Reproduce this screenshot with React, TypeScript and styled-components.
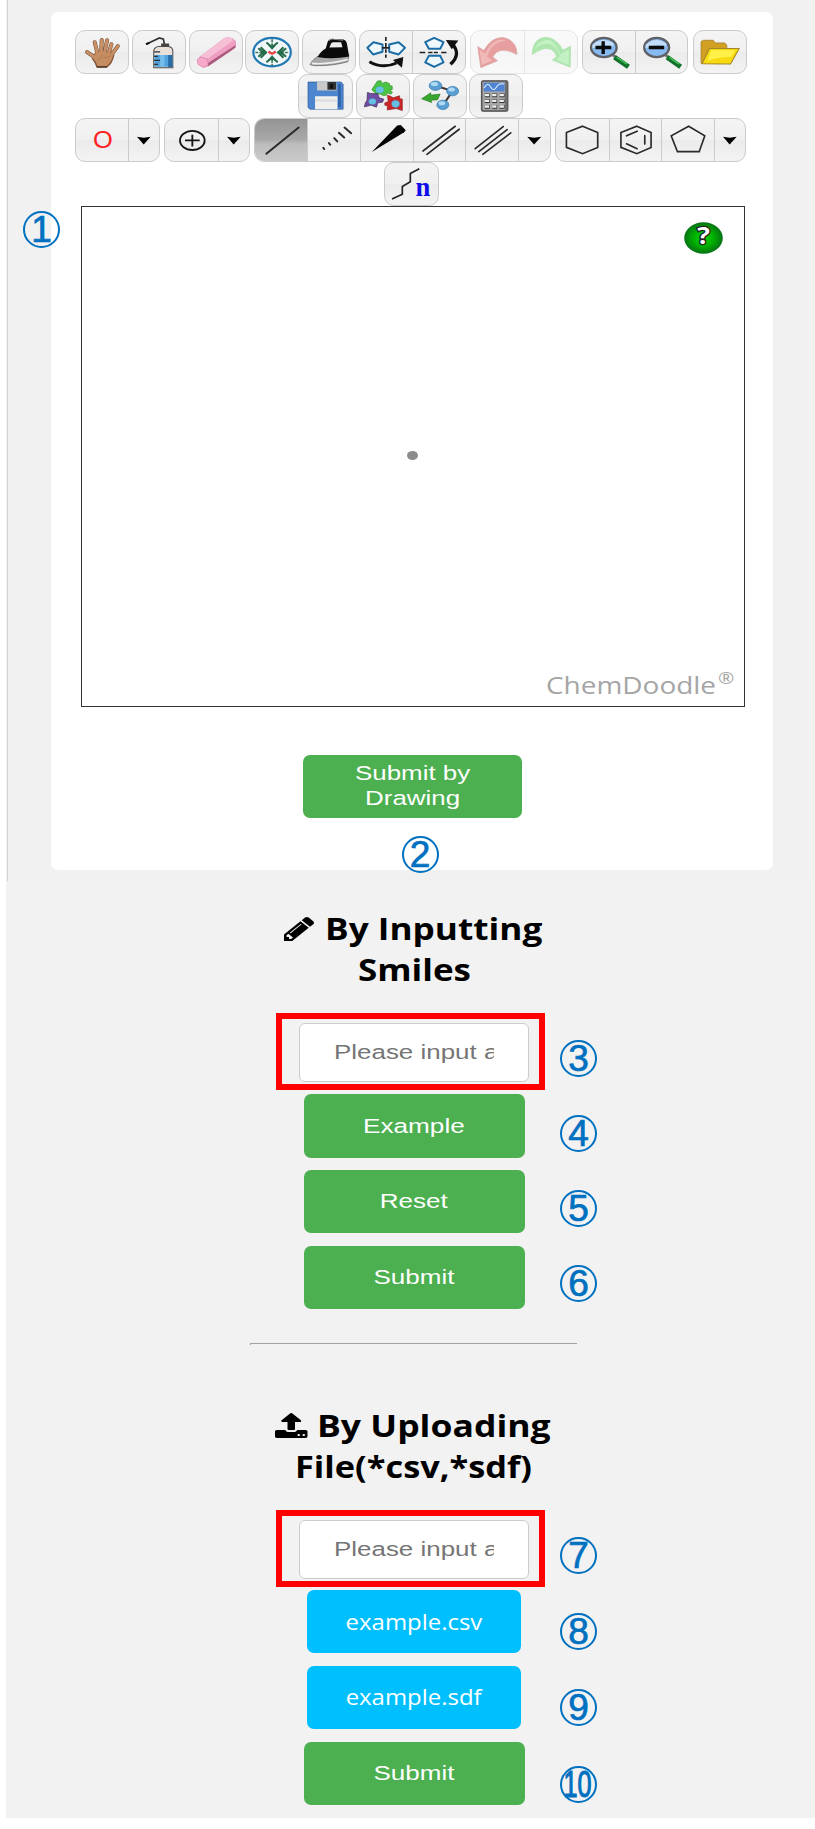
import React from 'react';
import styled, { createGlobalStyle, css } from 'styled-components';

const Global = createGlobalStyle`
  * { box-sizing: border-box; }
  body { margin: 0; background: #fff; font-family: 'Open Sans', 'Noto Sans', sans-serif; }
  button { font: inherit; border: 0; padding: 0; margin: 0; }
`;

/* ---------- page ---------- */
const Page = styled.div`
  width: 815px;
  height: 1829px;
  padding-left: 6px;
  background: #fff;
  overflow: hidden;
`;
const Main = styled.main`
  height: 1818px;
  background: #f2f2f2;
`;
const DrawSection = styled.section`
  height: 881px;
  margin-left: 1px;
  padding: 12px 0 0 43px;
  border-left: 1px solid #d3d3d3;
  background: #f1f1f1;
`;
const Card = styled.div`
  position: relative;
  width: 722px;
  height: 858px;
  padding-top: 18px;
  background: #fff;
  border-radius: 7px;
`;

/* ---------- toolbar ---------- */
const ToolRow = styled.div<{ $indent: number }>`
  display: flex;
  align-items: center;
  height: 44px;
  padding-left: ${(p) => p.$indent}px;
`;
const ToolGroup = styled.div<{ $gap?: number; $faded?: boolean }>`
  display: flex;
  flex: none;
  height: 43.6px;
  margin-left: ${(p) => p.$gap ?? 0}px;
  border: 1px solid #cbcbcb;
  border-radius: 10px;
  overflow: hidden;
  background: linear-gradient(#f4f4f4, #f0f0f0 49%, #ebebeb 51%, #f3f3f3);
  opacity: ${(p) => (p.$faded ? 0.48 : 1)};
`;
const ToolButton = styled.button<{ $w: number; $active?: boolean }>`
  flex: none;
  width: ${(p) => p.$w}px;
  height: 100%;
  background: transparent;
  & + & { border-left: 1px solid #cbcbcb; }
  ${(p) => p.$active && css`background: linear-gradient(#949494, #a8a8a8 48%, #bdbdbd 60%, #cacaca);`}
  svg { display: block; width: 100%; height: 100%; }
`;

const Icon = ({ box, children }: { box: string; children: React.ReactNode }) => (
  <svg viewBox={box} preserveAspectRatio="none">{children}</svg>
);

const Hand = () => {
  const fingers = 'M112 104L103 67M122 100L124 60M132 100L140 61M143 106L153 73M148 112L172 79M112 122L98 109L80 97';
  return (
    <Icon box="47 33 157 126">
      <path d={fingers} stroke="#775034" strokeWidth="12" strokeLinecap="round" fill="none" />
      <path d="M104 98Q126 88 150 98L162 106Q156 134 141 143H108Q103 128 94 116Z" fill="#80563a" />
      <path d={fingers} stroke="#c99067" strokeWidth="9" strokeLinecap="round" fill="none" />
      <path d="M106 98Q126 92 147 100L158 107Q152 130 138 140H112Q108 128 98 115Z" fill="#c68c61" />
      <path d="M110 124Q121 116 124 106M128 112Q140 118 151 108" stroke="#ae784f" strokeWidth="2.5" fill="none" />
      <path d="M109 142H140" stroke="#4d3322" strokeWidth="4" />
    </Icon>
  );
};
const Bottle = () => (
  <Icon box="219 33 156 126">
    <path d="M258 73L298 54L310 58L313 74" fill="none" stroke="#333" strokeWidth="5" />
    <path d="M258 73L268 69" stroke="#111" strokeWidth="6" />
    <path d="M303 71h24v11h-24z" fill="#444" />
    <path d="M281 92Q284 81 296 80H325Q337 82 338 92V144H281Z" fill="#e9e0da" stroke="#4b4b4b" strokeWidth="3" />
    <path d="M283 106H336V141H283Z" fill="#4fa3df" />
    <path d="M324 106H337V142H324Z" fill="#2a6da6" />
    <path d="M300 106h13v35h-13z" fill="#77bdeb" />
    <path d="M282 96h18M282 110h12M282 122h18M282 134h12" stroke="#333" strokeWidth="4" />
  </Icon>
);
const Eraser = () => (
  <Icon box="390 33 157 126">
    <path d="M412 120L420 110L492 55L500 52L516 54L527 65L527 82L518 90L446 139L430 144L414 134Z" fill="#d985aa" />
    <path d="M420 110L492 55L500 52L516 54L520 63L444 117Z" fill="#f6bfd6" />
    <path d="M444 117L520 61L527 68L525 77L443 132Z" fill="#ee9fc2" />
    <path d="M443 131L526 76L525 84L444 140Z" fill="#a7597e" />
    <path d="M412 121L421 112L442 118L444 137L430 143L414 134Z" fill="#f7a9c9" stroke="#dd85ad" strokeWidth="2" />
  </Icon>
);
const Snowflake = () => (
  <Icon box="559 33 156 126">
    <ellipse cx="637" cy="97" rx="56" ry="43" fill="#f1f7f9" stroke="#2179b4" strokeWidth="6.5" />
    <path d="M637 58V88M637 108V138M587 98H623M651 98H688" stroke="#3a7b5a" strokeWidth="5" strokeDasharray="9 3" />
    <path d="M620 68L637 82L654 68M620 128L637 114L654 128M603 82L619 98L603 114M671 82L655 98L671 114M596 85L610 98L596 111M679 85L664 98L679 111" fill="none" stroke="#246b49" strokeWidth="6" />
    <path d="M625 77L637 89L649 77ZM625 119L637 107L649 119ZM609 87L622 98L609 109ZM665 87L652 98L665 109Z" fill="#246b49" />
    <path d="M628 92L637 98L646 92L650 99L637 106L624 99Z" fill="#e34343" />
  </Icon>
);
const Iron = () => (
  <Icon box="40 33 157 126">
    <path d="M61 135Q69 117 91 107L177 105L174 126Q130 139 75 138Z" fill="#a8a8a8" stroke="#555" strokeWidth="2" />
    <path d="M66 131Q110 136 174 119" stroke="#eee" strokeWidth="5" fill="none" />
    <path d="M83 112Q96 91 108 86L114 65Q118 56 130 57L161 59Q169 61 171 69L178 110Q130 120 83 112Z" fill="#0b0b0b" />
    <path d="M119 83L124 71Q126 67 132 67L154 67L158 82Z" fill="#ececec" />
    <path d="M117 63Q121 56 132 58L160 61" stroke="#888" strokeWidth="3" fill="none" />
  </Icon>
);
const FlipH = () => (
  <Icon box="213 33 154 126">
    <path d="M235 84L253 67L280 74V96L252 104ZM347 84L328 67L300 74V96L328 104Z" fill="#eff8fc" stroke="#1b6ca5" strokeWidth="6" strokeLinejoin="round" />
    <path d="M290 51V63M290 69V82M290 88V99M290 104V114M279 84H301" stroke="#222" strokeWidth="5" />
    <path d="M241 126Q281 149 322 130" fill="none" stroke="#111" strokeWidth="9" />
    <path d="M311 121L342 112L338 144Z" fill="#111" />
  </Icon>
);
const FlipV = () => (
  <Icon box="368 33 156 126">
    <path d="M432 54L460 67L450 87H416L405 67ZM432 142L460 128L450 108H416L405 128Z" fill="#eff8fc" stroke="#1b6ca5" strokeWidth="6" strokeLinejoin="round" />
    <path d="M388 98H405M414 98H427M431 98H443M453 98H469" stroke="#222" strokeWidth="5" />
    <path d="M481 134Q515 103 486 72" fill="none" stroke="#111" strokeWidth="10" />
    <path d="M467 60L505 62L485 88Z" fill="#111" />
  </Icon>
);
const Undo = () => (
  <Icon box="544 33 157 126">
    <path d="M564 80L573 144L623 123L608 112Q627 75 681 104Q680 60 640 53Q606 50 582 92Z" fill="#cf3636" stroke="#aa4a4a" strokeWidth="2" />
    <path d="M569 90L576 136L608 122L592 111Q605 65 650 62Q611 49 586 101Z" fill="#e36f6d" />
  </Icon>
);
const Redo = () => (
  <Icon box="12 33 158 126">
    <path d="M34 104Q34 58 72 52Q107 52 127 91L150 79L149 143L95 121L108 111Q92 65 34 104Z" fill="#57cf57" stroke="#59b759" strokeWidth="2" />
    <path d="M39 88Q58 56 87 61Q107 71 118 104L145 88L144 136L106 120L117 109Q97 47 39 88Z" fill="#86e284" />
  </Icon>
);
const Magnifier = ({ plus }: { plus?: boolean }) => (
  <Icon box={plus ? '190 33 154 126' : '189 33 158 126'}>
    <path d="M279 106L299 120" stroke="#777" strokeWidth="9" />
    <path d="M290 117L319 137" stroke="#11702a" strokeWidth="15" strokeLinecap="square" />
    <path d="M290 113L321 133" stroke="#40bd55" strokeWidth="5" />
    <ellipse cx="252" cy="83" rx="38" ry="29" fill="#87baf0" stroke="#5d6064" strokeWidth="7" />
    <path d="M218 75Q247 48 281 70L280 80Q246 70 218 86Z" fill="#c3ddf8" />
    <path d={plus ? 'M227 83H274M250 64V103' : 'M228 83H275'} stroke="#0b0b0b" strokeWidth="10" />
  </Icon>
);
const Folder = () => (
  <Icon box="522 33 156 126">
    <path d="M543 131V65L550 61H579L586 69H614L620 77V91L602 132Z" fill="#d1a022" stroke="#9a741c" strokeWidth="2" />
    <path d="M546 132L568 86H657L631 133Z" fill="#f7d90f" stroke="#a1842c" strokeWidth="3" strokeLinejoin="round" />
    <path d="M573 91H645L634 111Q590 112 562 124Z" fill="#fff14a" />
  </Icon>
);
const Floppy = () => (
  <Icon box="28 167 157 124">
    <path d="M55 188H154L160 195V269H61L55 264Z" fill="#4d86cf" stroke="#2a5694" strokeWidth="2" />
    <path d="M82 187H140V213H82Z" fill="#c9c9c9" />
    <path d="M113 188H139V211H113Z" fill="#303030" /><path d="M120 193H130V208H120Z" fill="#111" />
    <path d="M76 230H143V269H76Z" fill="#f0f0ee" /><path d="M76 239H143V247H76Z" fill="#dedede" />
    <path d="M145 194H153V263H145Z" fill="#2e62aa" />
  </Icon>
);
const Blocks = () => (
  <Icon box="201 167 155 124">
    <path d="M256 194L262 185L272 184L276 192L287 188L298 193V199L306 200V210L299 211L307 219L302 224L290 220L289 227L279 228L270 224L257 222L245 211Z" fill="#4cc443" stroke="#31882c" strokeWidth="2" />
    <path d="M232 219L242 222L263 223L267 235L281 239L277 248L263 250L259 263L243 257L223 262L226 250L231 242Z" fill="#704ca3" stroke="#3c2859" strokeWidth="2" />
    <path d="M292 227L302 231L309 235L328 229L328 237L336 239V273L318 267L291 271L292 259L284 257V250L294 247Z" fill="#cf2427" stroke="#8c2022" strokeWidth="2" />
    <g fill="#68bfe4" stroke="#3e91b8"><ellipse cx="269" cy="211" rx="12" ry="10" /><ellipse cx="247" cy="246" rx="11" ry="9" /><ellipse cx="316" cy="253" rx="12" ry="11" /></g>
  </Icon>
);
const Molecule = () => (
  <Icon box="373 167 155 124">
    <path d="M437 199L488 215L460 256" fill="none" stroke="#403537" strokeWidth="6" />
    <g fill="#5a9fd3" stroke="#397ba6" strokeWidth="2"><ellipse cx="437" cy="199" rx="19" ry="14" /><ellipse cx="488" cy="215" rx="18" ry="14" /><ellipse cx="459" cy="256" rx="18" ry="14" /></g>
    <g fill="#b0d9f3"><ellipse cx="434" cy="194" rx="11" ry="6" /><ellipse cx="485" cy="210" rx="10" ry="6" /><ellipse cx="456" cy="251" rx="10" ry="6" /></g>
    <path d="M396 238L423 220V227L451 224L443 241L423 242L426 249Z" fill="#38a62f" stroke="#267920" strokeWidth="2" />
  </Icon>
);
const Calculator = () => (
  <Icon box="540 167 155 124">
    <rect x="574" y="184" width="79" height="91" rx="5" fill="#707070" stroke="#4e4e4e" strokeWidth="3" />
    <rect x="578" y="188" width="66" height="83" fill="#a6a6a6" />
    <rect x="581" y="190" width="62" height="26" fill="#4e83d4" />
    <path d="M582 206Q592 186 601 202T618 204T642 194" fill="none" stroke="#eaf4ff" strokeWidth="3" />
    <path d="M584 228H643M584 245H643M584 262H643" stroke="#333" strokeWidth="11" strokeDasharray="15 7" />
    <path d="M584 227H643M584 244H643M584 261H643" stroke="#eee" strokeWidth="7" strokeDasharray="13 9" />
  </Icon>
);
const Caret = () => (
  <Icon box="208 297 90 126"><path d="M232 351Q252 356 273 351L252 374Z" fill="#000" /></Icon>
);
const Oxygen = () => (
  <Icon box="47 297 158 126">
    <text transform="translate(128 384) scale(1.06 1)" textAnchor="middle" fontFamily="Liberation Sans, sans-serif" fontSize="72" fill="#f22">O</text>
  </Icon>
);
const Charge = () => (
  <Icon box="316 297 158 126">
    <ellipse cx="398" cy="362" rx="37" ry="29" fill="none" stroke="#161616" strokeWidth="5.5" />
    <path d="M376 362H420M398 345V380" stroke="#161616" strokeWidth="5.5" />
  </Icon>
);
const Strokes = ({ box, d, width = 5 }: { box: string; d: string; width?: number }) => (
  <Icon box={box}><path d={d} fill="none" stroke="#2a2a2a" strokeWidth={width} strokeLinecap="round" /></Icon>
);
const Chain = () => (
  <Icon box="286 430 157 124">
    <path d="M307 537L338 523V500L362 486V461L389 447" fill="none" stroke="#222" strokeWidth="5" />
    <text x="400" y="529" textAnchor="middle" fontFamily="Liberation Serif, serif" fontWeight="700" fontSize="80" fill="#0d0dec">n</text>
  </Icon>
);

/* ---------- sketch canvas ---------- */
const Sketch = styled.div`
  position: relative;
  width: 663.5px;
  height: 501px;
  margin-left: 30px;
  border: solid #333;
  border-width: 1.5px 1.5px 1.5px 1px;
  background: #fff;
`;
const Atom = styled.i`
  position: absolute;
  left: 324.5px;
  top: 244px;
  width: 11px;
  height: 9px;
  border-radius: 50%;
  background: #8c8c8c;
`;
const Help = styled.svg`
  position: absolute;
  left: 602px;
  top: 15px;
  width: 39px;
  height: 32px;
`;
const Brand = styled.div`
  position: absolute;
  left: 464px;
  bottom: 6px;
  display: flex;
  font-size: 23px;
  line-height: 30px;
  color: #a5a5a5;
  white-space: nowrap;
`;
const Sup = styled.span`
  font-size: 16.5px;
  line-height: 15px;
`;

/* Text box with a fixed advance whose glyphs are widened to fill it. */
const FitBox = styled.span<{ $w: number }>`
  display: block;
  flex: none;
  width: ${(p) => p.$w}px;
`;
const FitInner = styled.span<{ $sx: number }>`
  display: inline-block;
  transform: scaleX(${(p) => p.$sx});
  transform-origin: 0 50%;
  white-space: pre;
`;
const Fit = ({ w, sx, children }: { w: number; sx: number; children: React.ReactNode }) => (
  <FitBox $w={w}><FitInner $sx={sx}>{children}</FitInner></FitBox>
);
const Wide = styled.span<{ $sx: number }>`
  display: block;
  transform: scaleX(${(p) => p.$sx});
  white-space: nowrap;
`;

/* ---------- form ---------- */
const Action = styled.button<{ $blue?: boolean }>`
  display: flex;
  flex-direction: column;
  align-items: center;
  justify-content: center;
  width: ${(p) => (p.$blue ? 214.5 : 221)}px;
  height: 63.5px;
  margin: 0 0 12.4px ${(p) => (p.$blue ? 300.5 : 298)}px;
  padding: 0 ${(p) => (p.$blue ? 0 : 2)}px 0 0;
  border-radius: 7px;
  background: ${(p) => (p.$blue ? '#00bfff' : '#4caf50')};
  color: #fff;
  font-family: ${(p) => (p.$blue ? "'Open Sans', 'Noto Sans', sans-serif" : "'Liberation Sans', sans-serif")};
  font-size: ${(p) => (p.$blue ? 21 : 20.5)}px;
  line-height: 24.3px;
`;
const DrawSubmit = styled(Action)`
  width: 219px;
  height: 63px;
  margin: 48px 0 0 252.3px;
  padding: 0 0 1.5px;
`;
const Item = styled.div`
  position: relative;
`;
const Heading = styled.h2<{ $top: number; $pitch: number }>`
  margin: ${(p) => p.$top}px 0 0;
  font-size: 30px;
  font-weight: 700;
  line-height: ${(p) => p.$pitch}px;
  color: #000;
`;
const Line = styled.span<{ $indent: number }>`
  display: flex;
  align-items: center;
  padding-left: ${(p) => p.$indent}px;
`;
const Glyph = styled.svg<{ $w: number; $h: number; $gap: number; $dy?: number }>`
  flex: none;
  width: ${(p) => p.$w}px;
  height: ${(p) => p.$h}px;
  margin: ${(p) => p.$dy ?? 0}px ${(p) => p.$gap}px 0 0;
`;
const RedFrame = styled.div<{ $top: number; $after: number }>`
  position: relative;
  width: 269px;
  height: 77px;
  margin: ${(p) => p.$top}px 0 ${(p) => p.$after}px 270px;
  padding: 4.3px 0 0 17px;
  border: 6px solid #f00;
`;
const Field = styled.div`
  width: 229.5px;
  height: 59px;
  padding: 0 34px 0 34px;
  border: 1px solid #ccc;
  border-radius: 6px;
  background: #fff;
`;
const Placeholder = styled.div`
  overflow: hidden;
  height: 57px;
  color: #757575;
  font: 20.5px/55px 'Liberation Sans', sans-serif;
`;
const Rule = styled.hr`
  width: 327px;
  height: 2px;
  margin: 33.5px 0 0 244px;
  border: 0;
  border-top: 1.5px solid #a3a3a3;
  border-left: 1px solid #a3a3a3;
`;

/* ---------- numbered callouts ---------- */
const Badge = styled.span<{ $x: number; $y: number }>`
  position: absolute;
  left: ${(p) => p.$x}px;
  top: ${(p) => p.$y}px;
  display: flex;
  align-items: center;
  justify-content: center;
  width: 37px;
  height: 37px;
  border: 2px solid #0070c0;
  border-radius: 50%;
  color: #0070c0;
  font: 37px/37px 'Liberation Sans', sans-serif;
`;
const Digits = styled.span<{ $narrow?: boolean }>`
  -webkit-text-stroke: 0.7px #0070c0;
  ${(p) => p.$narrow && css`
    -webkit-text-stroke-width: 1.2px;
    transform: translateX(-1px) scaleX(0.68);
  `}
`;
const Callout = ({ n, x, y }: { n: number; x: number; y: number }) => (
  <Badge $x={x} $y={y}><Digits $narrow={n > 9}>{n}</Digits></Badge>
);

const InputBox = ({ top, after, n }: { top: number; after: number; n: number }) => (
  <RedFrame $top={top} $after={after}>
    <Field><Placeholder><FitInner $sx={1.265}>Please input a</FitInner></Placeholder></Field>
    <Callout n={n} x={278} y={21} />
  </RedFrame>
);

export default function App() {
  return (
    <Page>
      <Global />
      <Main>
        <DrawSection>
          <Card>
            <ToolRow $indent={23.7}>
              <ToolGroup><ToolButton $w={52.5}><Hand /></ToolButton></ToolGroup>
              <ToolGroup $gap={2.7}><ToolButton $w={52.2}><Bottle /></ToolButton></ToolGroup>
              <ToolGroup $gap={2.8}><ToolButton $w={52.5}><Eraser /></ToolButton></ToolGroup>
              <ToolGroup $gap={1.6}><ToolButton $w={52.2}><Snowflake /></ToolButton></ToolGroup>
              <ToolGroup $gap={2.8}><ToolButton $w={52.5}><Iron /></ToolButton></ToolGroup>
              <ToolGroup $gap={3}>
                <ToolButton $w={51.7}><FlipH /></ToolButton>
                <ToolButton $w={52.7}><FlipV /></ToolButton>
              </ToolGroup>
              <ToolGroup $gap={4} $faded>
                <ToolButton $w={52.8}><Undo /></ToolButton>
                <ToolButton $w={53.2}><Redo /></ToolButton>
              </ToolGroup>
              <ToolGroup $gap={4}>
                <ToolButton $w={51.8}><Magnifier plus /></ToolButton>
                <ToolButton $w={52.8}><Magnifier /></ToolButton>
              </ToolGroup>
              <ToolGroup $gap={4.2}><ToolButton $w={52.3}><Folder /></ToolButton></ToolGroup>
            </ToolRow>
            <ToolRow $indent={247.3}>
              <ToolGroup><ToolButton $w={52.5}><Floppy /></ToolButton></ToolGroup>
              <ToolGroup $gap={3}><ToolButton $w={52}><Blocks /></ToolButton></ToolGroup>
              <ToolGroup $gap={3.2}><ToolButton $w={52}><Molecule /></ToolButton></ToolGroup>
              <ToolGroup $gap={2}><ToolButton $w={52}><Calculator /></ToolButton></ToolGroup>
            </ToolRow>
            <ToolRow $indent={23.7}>
              <ToolGroup>
                <ToolButton $w={52.7}><Oxygen /></ToolButton>
                <ToolButton $w={31}><Caret /></ToolButton>
              </ToolGroup>
              <ToolGroup $gap={4}>
                <ToolButton $w={52.7}><Charge /></ToolButton>
                <ToolButton $w={31}><Caret /></ToolButton>
              </ToolGroup>
              <ToolGroup $gap={4}>
                <ToolButton $w={52} $active><Strokes box="585 297 156 126" d="M619 402L716 323" width={6} /></ToolButton>
                <ToolButton $w={52.8}>
                  <Strokes box="55 297 156 126" d="M101 384L104 388M118 370L122 375M134 355L143 365M148 339L164 353M165 323L185 340" width={6} />
                </ToolButton>
                <ToolButton $w={53}>
                  <Icon box="212 297 158 126"><path d="M245 397L322 317L333 315L348 331L343 337Z" fill="#050505" /></Icon>
                </ToolButton>
                <ToolButton $w={52.2}><Strokes box="372 297 154 126" d="M399 394L496 319M411 404L508 328" /></ToolButton>
                <ToolButton $w={53}><Strokes box="528 297 158 126" d="M556 387L641 320M567 396L653 329M579 404L664 339" /></ToolButton>
                <ToolButton $w={31.8}><Caret /></ToolButton>
              </ToolGroup>
              <ToolGroup $gap={4}>
                <ToolButton $w={52.8}><Strokes box="109 297 157 126" d="M188 319L233 338V383L188 402L140 383V338Z" /></ToolButton>
                <ToolButton $w={52}>
                  <Strokes box="268 297 154 126" d="M349 319L392 338V383L349 402L301 383V338ZM318 348L350 334M373 347V373M318 372L350 387" />
                </ToolButton>
                <ToolButton $w={53}><Strokes box="424 297 158 126" d="M505 319L554 348L537 396H471L452 348Z" /></ToolButton>
                <ToolButton $w={31}><Caret /></ToolButton>
              </ToolGroup>
            </ToolRow>
            <ToolRow $indent={333.3}>
              <ToolGroup><ToolButton $w={52.3}><Chain /></ToolButton></ToolGroup>
            </ToolRow>
            <Sketch>
              <Atom />
              <Help viewBox="0 0 39 32">
                <defs>
                  <radialGradient id="helpFill"><stop offset="0" stopColor="#00d600" /><stop offset="0.55" stopColor="#00ae00" /><stop offset="1" stopColor="#067116" /></radialGradient>
                </defs>
                <ellipse cx="19.5" cy="16" rx="19.3" ry="15.7" fill="url(#helpFill)" />
                <text transform="translate(19.5 22) scale(1.1 1)" textAnchor="middle" fontFamily="Open Sans, sans-serif" fontWeight="700" fontSize="24" fill="#fff" stroke="#222" strokeWidth="2.6" paintOrder="stroke">?</text>
              </Help>
              <Brand><Fit w={172} sx={1.215}>ChemDoodle</Fit><Sup><Fit w={17} sx={1.19}>®</Fit></Sup></Brand>
            </Sketch>
            <DrawSubmit><Wide $sx={1.265}>Submit by</Wide><Wide $sx={1.265}>Drawing</Wide></DrawSubmit>
            <Callout n={1} x={-28} y={199} />
            <Callout n={2} x={350.5} y={824.3} />
          </Card>
        </DrawSection>

        <Heading $top={26.5} $pitch={41.5}>
          <Line $indent={278}>
            <Glyph $w={30} $h={24} $gap={11} $dy={1} viewBox="128 149 1515 1515" preserveAspectRatio="none">
              <path d="M491 1536l91-91-235-235-91 91v107h128v128h107zM1014 608q0-22-22-22-10 0-17 7l-542 542q-7 7-7 17 0 22 22 22 10 0 17-7l542-542q7-7 7-17zM960 416l416 416-832 832H128v-416zM1643 512q0 53-37 90l-166 166-416-416 166-165q36-38 90-38 53 0 91 38l235 234q37 39 37 91z" />
            </Glyph>
            <Fit w={216} sx={1.173}>By Inputting</Fit>
          </Line>
          <Line $indent={351.5}><Fit w={112} sx={1.165}>Smiles</Fit></Line>
        </Heading>
        <InputBox top={22.5} after={4} n={3} />
        <Item><Action><Wide $sx={1.275}>Example</Wide></Action><Callout n={4} x={554} y={21} /></Item>
        <Item><Action><Wide $sx={1.27}>Reset</Wide></Action><Callout n={5} x={554} y={20.3} /></Item>
        <Item><Action><Wide $sx={1.27}>Submit</Wide></Action><Callout n={6} x={554} y={19.5} /></Item>
        <Rule />

        <Heading $top={61.7} $pitch={40.5}>
          <Line $indent={269}>
            <Glyph $w={32.5} $h={25} $gap={9.8} $dy={-2} viewBox="64 64 1664 1600" preserveAspectRatio="none">
              <path d="M1344 1472q0-26-19-45t-45-19-45 19-19 45 19 45 45 19 45-19 19-45zm256 0q0-26-19-45t-45-19-45 19-19 45 19 45 45 19 45-19 19-45zm128-224v320q0 40-28 68t-68 28H160q-40 0-68-28t-28-68v-320q0-40 28-68t68-28h427q21 56 70.5 92t110.5 36h256q61 0 110.5-36t70.5-92h427q40 0 68 28t28 68zm-325-648q-17 40-59 40h-256v448q0 26-19 45t-45 19H768q-26 0-45-19t-19-45V640H448q-42 0-59-40-17-39 14-69l448-448q18-19 45-19t45 19l448 448q31 30 14 69z" />
            </Glyph>
            <Fit w={232} sx={1.184}>By Uploading</Fit>
          </Line>
          <Line $indent={289}><Fit w={236} sx={1.145}>File(*csv,*sdf)</Fit></Line>
        </Heading>
        <InputBox top={22.5} after={3} n={7} />
        <Item><Action $blue><Wide $sx={1.14}>example.csv</Wide></Action><Callout n={8} x={554} y={22.7} /></Item>
        <Item><Action $blue><Wide $sx={1.14}>example.sdf</Wide></Action><Callout n={9} x={554} y={23} /></Item>
        <Item><Action><Wide $sx={1.27}>Submit</Wide></Action><Callout n={10} x={554} y={24} /></Item>
      </Main>
    </Page>
  );
}
